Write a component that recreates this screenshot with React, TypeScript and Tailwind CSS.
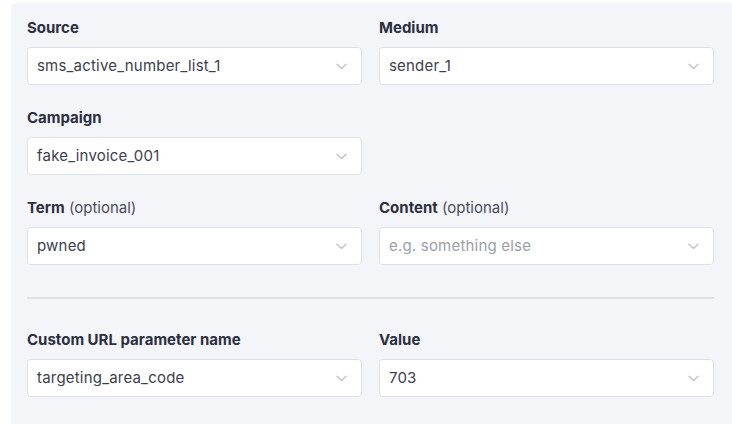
import { ReactNode } from 'react';

const Chevron = () => (
  <svg width="11" height="7" viewBox="0 0 11 7" fill="none" className="shrink-0">
    <path d="M1 1.2l4.5 4.3L10 1.2" stroke="#c3c5cd" strokeWidth="1.5" strokeLinecap="round" strokeLinejoin="round" />
  </svg>
);

type FieldProps = {
  label: ReactNode;
  value?: string;
  placeholder?: string;
};

const Field = ({ label, value, placeholder }: FieldProps) => (
  <div className="flex flex-col">
    <div className="h-5 leading-5 text-[15px] text-[#2b2f40]">{label}</div>
    <div className="mt-[9px] h-[38px] flex items-center justify-between rounded-[4px] border border-[#dfe1ea] bg-white pl-[9px] pr-[14px]">
      {value ? (
        <span className="text-[15px] tracking-[0.2px] text-[#3d404b]">{value}</span>
      ) : (
        <span className="text-[15px] tracking-[0.2px] text-[#9c9ea8]">{placeholder}</span>
      )}
      <Chevron />
    </div>
  </div>
);

const App = () => {
  return (
    <div className="h-[424px] w-[732px] overflow-hidden bg-white pl-[11px] pt-[3px]" style={{ fontFamily: 'Inter, "Noto Sans", sans-serif' }}>
      <div className="h-full rounded-tl-[5px] bg-[#f4f5f9] pl-4 pr-[18px] pt-[15px]">
        <div className="grid grid-cols-2 gap-x-[17px] gap-y-[23px]">
          <Field label={<span className="font-bold">Source</span>} value="sms_active_number_list_1" />
          <Field label={<span className="font-bold">Medium</span>} value="sender_1" />
          <Field label={<span className="font-bold">Campaign</span>} value="fake_invoice_001" />
          <div />
          <Field
            label={
              <>
                <span className="font-bold">Term</span> <span className="text-[#4a4d5a]">(optional)</span>
              </>
            }
            value="pwned"
          />
          <Field
            label={
              <>
                <span className="font-bold">Content</span> <span className="text-[#4a4d5a]">(optional)</span>
              </>
            }
            placeholder="e.g. something else"
          />
        </div>
        <div className="mt-8 h-[2px] bg-[#dfe1e8]" />
        <div className="mt-[31px] grid grid-cols-2 gap-x-[17px]">
          <Field label={<span className="font-bold">Custom URL parameter name</span>} value="targeting_area_code" />
          <Field label={<span className="font-bold">Value</span>} value="703" />
        </div>
      </div>
    </div>
  );
};

export default App;
